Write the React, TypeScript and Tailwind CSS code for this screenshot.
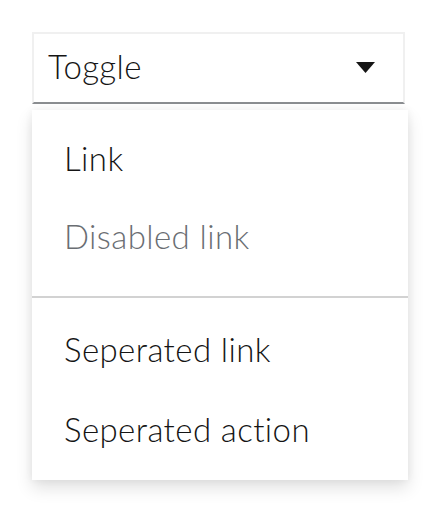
export default function App() {
  const font = { fontFamily: 'Lato, "Noto Sans", sans-serif' };
  return (
    <div className="min-h-screen bg-white pl-[32px] pt-[32px]" style={font}>
      {/* Toggle */}
      <button className="flex h-[72px] w-[373px] items-center justify-between border-2 border-[#f0f0f0] border-b-[#8a8d90] bg-white pl-[14px] pr-[28px] text-[33px] font-light tracking-[0.4px] text-[#151515]">
        <span className="mb-[4px] leading-[48px]">Toggle</span>
        <svg width="19" height="11" viewBox="0 0 19 11" className="mb-[1px]">
          <polygon points="0,0 19,0 9.5,11" fill="#151515" />
        </svg>
      </button>

      {/* Menu */}
      <div className="mt-[6px] flex h-[370px] w-[376px] flex-col bg-white pt-[8px] font-light tracking-[0.4px] shadow-[0_8px_16px_0_rgba(3,3,3,0.12),0_0_8px_0_rgba(3,3,3,0.06)]">
        <div className="h-[78px] px-[32px] pt-[16px] text-[33px] leading-[48px] text-[#151515]">Link</div>
        <div className="h-[78px] px-[32px] pt-[16px] text-[33px] leading-[48px] text-[#6a6e73]">Disabled link</div>
        <div className="mt-[22px] h-[2px] w-full bg-[#d2d2d2]" />
        <div className="mt-[11px] h-[80px] px-[32px] pt-[16px] text-[33px] leading-[48px] text-[#151515]">Seperated link</div>
        <div className="h-[80px] px-[32px] pt-[16px] text-[33px] leading-[48px] text-[#151515]">Seperated action</div>
      </div>
    </div>
  );
}
